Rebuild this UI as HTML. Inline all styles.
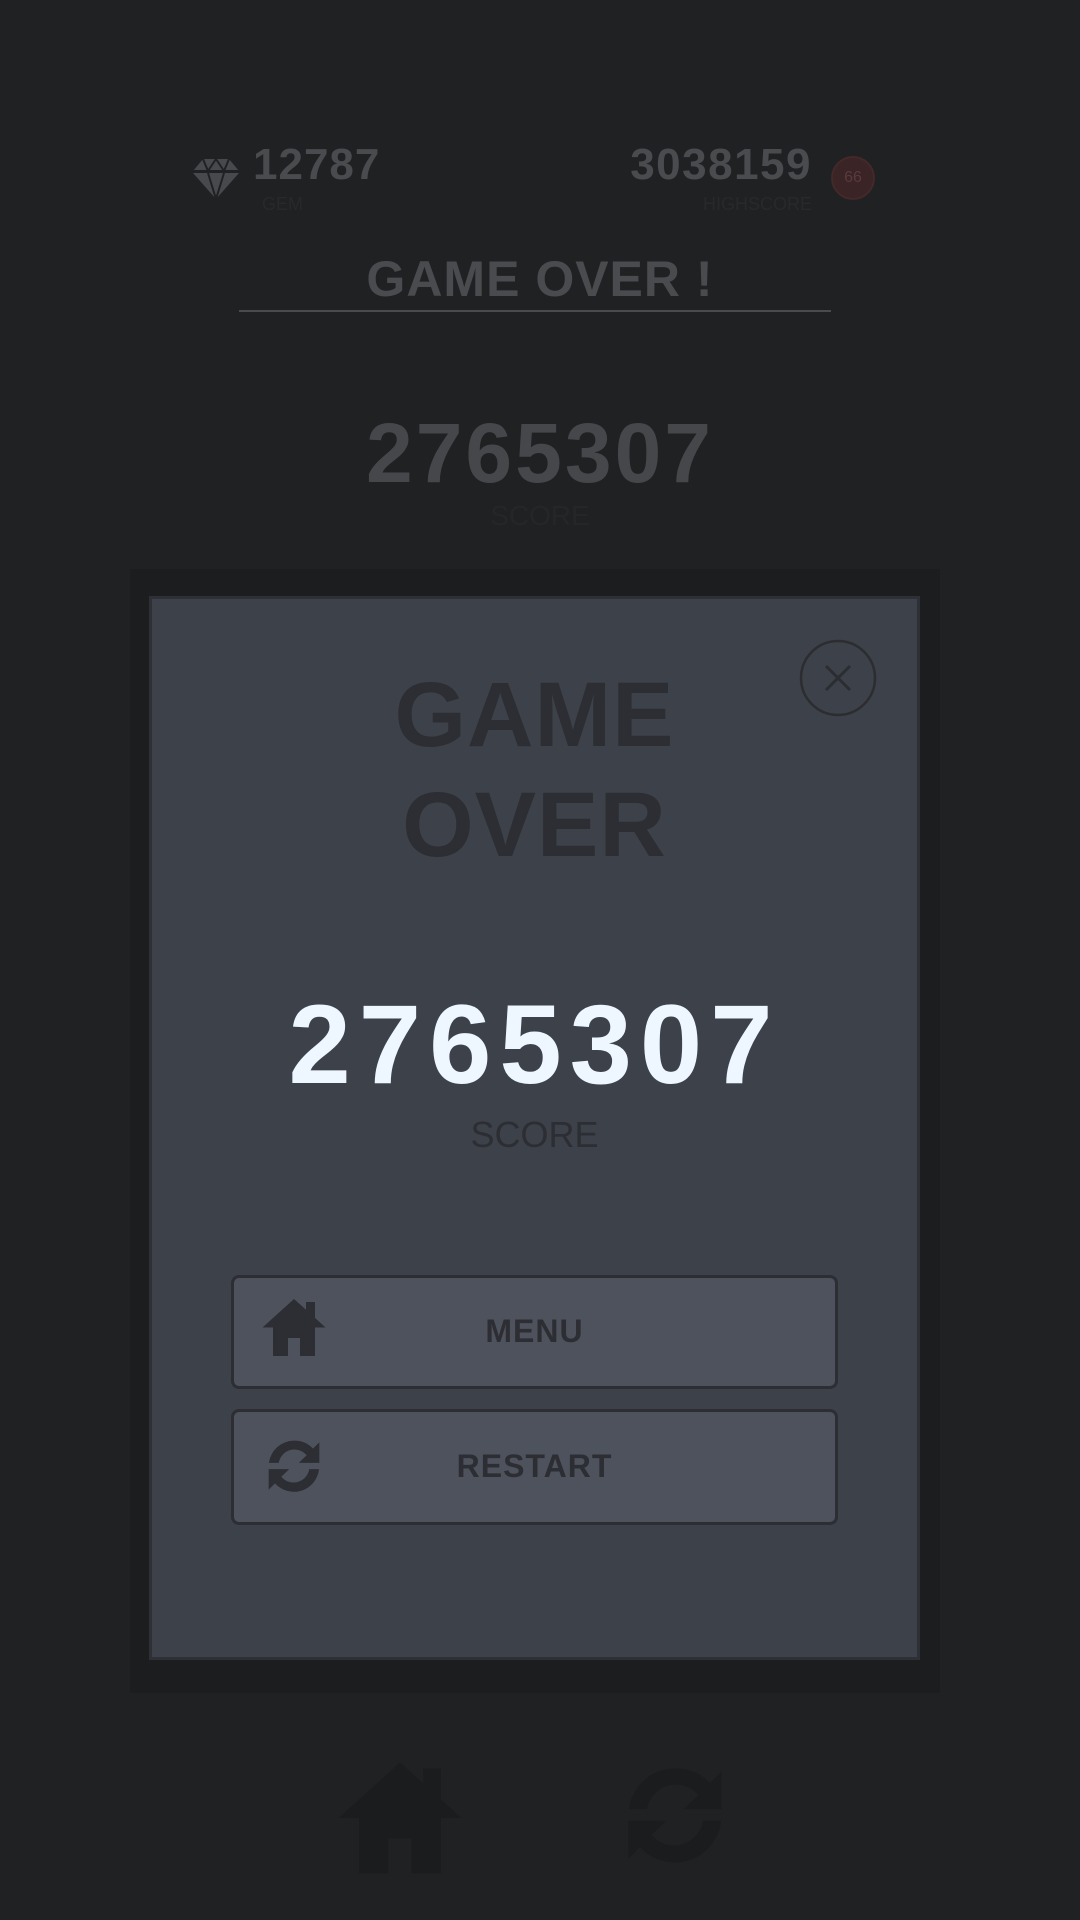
<!DOCTYPE html>
<html><head><meta charset="utf-8"><style>
*{margin:0;padding:0;box-sizing:border-box}
body{width:1080px;height:1920px;background:#202123;position:relative;overflow:hidden;font-family:"Liberation Sans",sans-serif}
.a{position:absolute}
.c{text-align:center}
</style></head><body>
<svg class="a" style="left:193px;top:157px" width="46" height="42" viewBox="0 0 46 42">
<path d="M10 2h26l10 12H0z M0 16h46L23 42z" fill="#48494c"/>
<path d="M10 2l5 12M36 2l-5 12M23 2l-8 12M23 2l8 12M0 14h46M15 16l8 26M31 16l-8 26" stroke="#202123" stroke-width="2" fill="none"/>
</svg>
<div class="a" style="left:253px;top:140px;font-size:44px;font-weight:bold;color:#4a4b4e;letter-spacing:1px">12787</div>
<div class="a" style="left:262px;top:194px;font-size:18px;color:#28292b">GEM</div>
<div class="a" style="left:560px;width:252px;text-align:right;top:140px;font-size:44px;font-weight:bold;color:#4a4b4e;letter-spacing:1.5px">3038159</div>
<div class="a" style="left:600px;width:212px;text-align:right;top:194px;font-size:18px;color:#28292b">HIGHSCORE</div>
<div class="a c" style="left:831px;top:156px;width:44px;height:44px;border-radius:50%;background:#3a2426;border:2px solid #44282a;color:#5a3a3c;font-size:16px;line-height:40px">66</div>
<div class="a c" style="left:0;width:1080px;top:250px;font-size:50px;font-weight:bold;color:#4a4b4e;letter-spacing:1px">GAME OVER !</div>
<div class="a" style="left:239px;top:310px;width:592px;height:2px;background:#4a4b4e"></div>
<div class="a c" style="left:0;width:1080px;top:405px;font-size:84px;font-weight:bold;color:#46474a;letter-spacing:3px">2765307</div>
<div class="a c" style="left:0;width:1080px;top:500px;font-size:28px;color:#252628">SCORE</div>
<svg class="a" style="left:330px;top:1745px" width="140" height="140" viewBox="0 0 24 24"><path d="M12 3L1.5 12.5H5V22h5v-6h4v6h5v-9.5h3.5L19 9.3V4h-3v2.6z" fill="#1b1c1e"/></svg>
<svg class="a" style="left:605px;top:1745px" width="140" height="140" viewBox="0 0 24 24"><path d="M12 4a8 8 0 0 0-7.9 7H7.2A5 5 0 0 1 16 8.6L13.5 11H20V4.5l-2 2A8 8 0 0 0 12 4zM4 13v6.5l2-2A8 8 0 0 0 19.9 13h-3.1A5 5 0 0 1 8 15.4l2.5-2.4z" fill="#1b1c1e"/></svg>
<div class="a" style="left:130px;top:569px;width:810px;height:1124px;background:#1c1d1f"></div>
<div class="a" style="left:149px;top:596px;width:771px;height:1064px;background:#3d414a;border:3px solid #2e3036"></div>
<svg class="a" style="left:799px;top:639px" width="78" height="78" viewBox="0 0 78 78"><circle cx="39" cy="39" r="37" fill="none" stroke="#2c2d31" stroke-width="2.5"/><path d="M27 27l24 24M51 27L27 51" stroke="#2c2d31" stroke-width="3"/></svg>
<div class="a c" style="left:149px;width:771px;top:660px;font-size:92px;font-weight:bold;color:#2c2e33;line-height:110px;letter-spacing:1px">GAME<br>OVER</div>
<div class="a c" style="left:149px;width:771px;top:980px;font-size:112px;font-weight:bold;color:#eef6ff;letter-spacing:8px">2765307</div>
<div class="a c" style="left:149px;width:771px;top:1114px;font-size:36px;color:#2c2e33">SCORE</div>
<div class="a" style="left:231px;top:1275px;width:607px;height:114px;background:#4e525d;border:3px solid #2c2e33;border-radius:8px"></div>
<div class="a c" style="left:231px;width:607px;top:1313px;font-size:32px;font-weight:bold;color:#2c2e33;letter-spacing:1px">MENU</div>
<svg class="a" style="left:258px;top:1290px" width="72" height="72" viewBox="0 0 24 24"><path d="M12 3L1.5 12.5H5V22h5v-6h4v6h5v-9.5h3.5L19 9.3V4h-3v2.6z" fill="#2c2e33"/></svg>
<div class="a" style="left:231px;top:1409px;width:607px;height:116px;background:#4e525d;border:3px solid #2c2e33;border-radius:8px"></div>
<div class="a c" style="left:231px;width:607px;top:1448px;font-size:32px;font-weight:bold;color:#2c2e33;letter-spacing:1px">RESTART</div>
<svg class="a" style="left:256px;top:1428px" width="76" height="76" viewBox="0 0 24 24"><path d="M12 4a8 8 0 0 0-7.9 7H7.2A5 5 0 0 1 16 8.6L13.5 11H20V4.5l-2 2A8 8 0 0 0 12 4zM4 13v6.5l2-2A8 8 0 0 0 19.9 13h-3.1A5 5 0 0 1 8 15.4l2.5-2.4z" fill="#2c2e33"/></svg>
</body></html>
